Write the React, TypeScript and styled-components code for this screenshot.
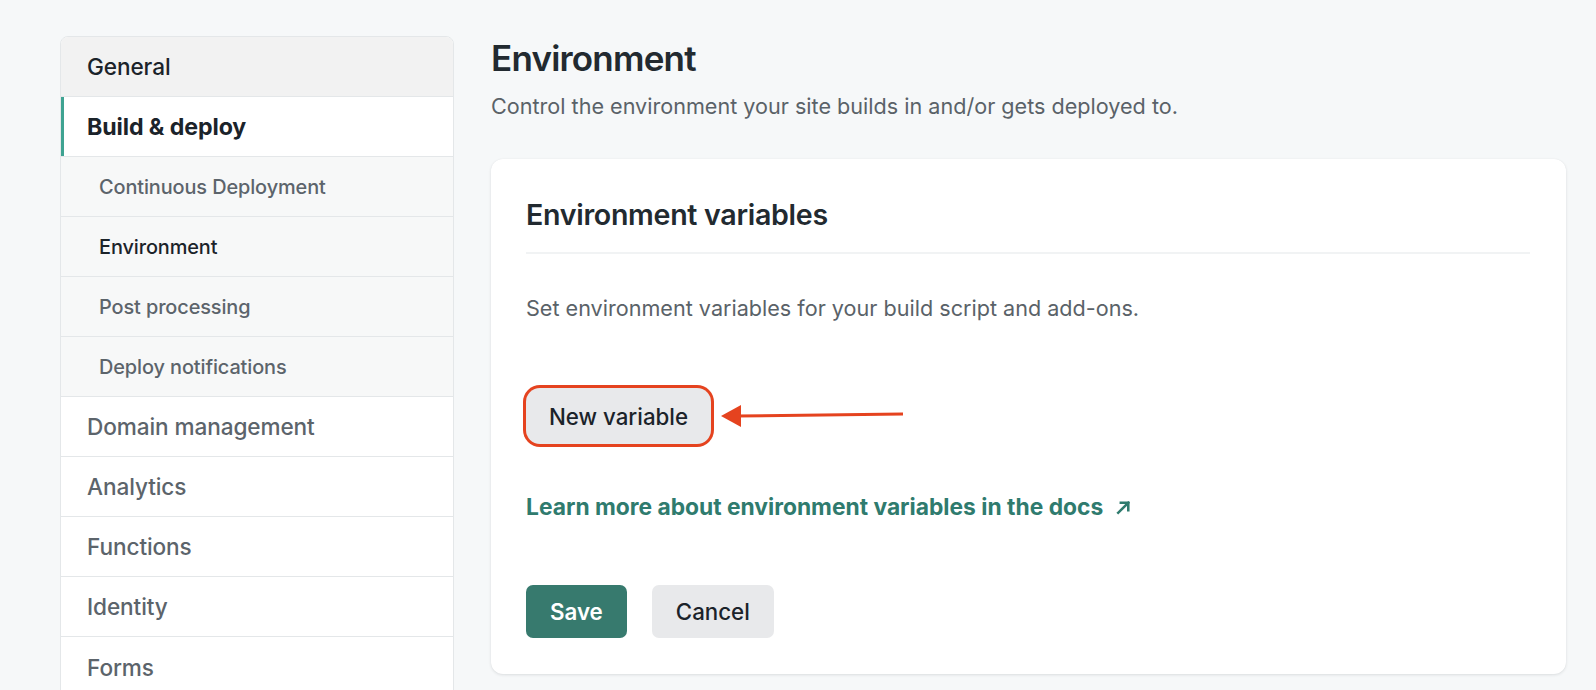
import React from "react";
import styled, { createGlobalStyle } from "styled-components";

const GlobalStyle = createGlobalStyle`
  html, body {
    margin: 0;
    padding: 0;
    background: #f6f8f9;
    font-family: Inter, "Noto Sans", "Liberation Sans", sans-serif;
    -webkit-font-smoothing: antialiased;
  }
  body { overflow: hidden; }
  * { box-sizing: border-box; }
`;

const Page = styled.div`
  display: flex;
  align-items: flex-start;
  gap: 37px;
  padding: 36px 30px 0 60px;
  height: 690px;
  overflow: hidden;
`;

const Sidebar = styled.nav`
  flex: 0 0 394px;
  border: 1px solid #e4e7e9;
  border-radius: 8px 8px 0 0;
  overflow: hidden;
  background: #ffffff;
`;

type ItemProps = { $variant: "header" | "active" | "primary" | "sub"; $current?: boolean };

const sizeFor = (v: ItemProps["$variant"]) =>
  v === "sub" ? "19.9px" : v === "active" ? "23.2px" : "22.6px";

const NavItem = styled.div<ItemProps>`
  display: flex;
  align-items: center;
  height: 60px;
  border-bottom: 1px solid #e4e7e9;
  padding-left: ${(p) => (p.$variant === "sub" ? "38px" : "26px")};
  font-size: ${(p) => sizeFor(p.$variant)};
  font-weight: ${(p) => (p.$variant === "active" ? 700 : 500)};
  letter-spacing: -0.1px;
  color: ${(p) =>
    p.$variant === "header" || p.$variant === "active" || p.$current ? "#1b232a" : "#5c646b"};
  background: ${(p) =>
    p.$variant === "header" ? "#f2f2f2" : p.$variant === "sub" ? "#f7f8f8" : "#ffffff"};
  box-shadow: ${(p) => (p.$variant === "active" ? "inset 3px 0 0 #3fa392" : "none")};
  &:last-child { border-bottom: none; }
`;

const Main = styled.main`
  flex: 1;
  display: flex;
  flex-direction: column;
  padding-top: 1px;
`;

const Title = styled.h1`
  margin: 0;
  font-size: 35px;
  line-height: 42px;
  font-weight: 600;
  color: #222a30;
  letter-spacing: -0.8px;
`;

const Lead = styled.p`
  margin: 12px 0 0;
  font-size: 21.6px;
  line-height: 30px;
  color: #5a6268;
`;

const Card = styled.section`
  margin-top: 38px;
  background: #ffffff;
  border-radius: 12px;
  box-shadow: 0 1px 3px rgba(30, 40, 50, 0.12), 0 0 1px rgba(30, 40, 50, 0.06);
  padding: 41px 36px 36px 35px;
  display: flex;
  flex-direction: column;
  align-items: flex-start;
`;

const CardTitle = styled.h2`
  margin: 0;
  align-self: stretch;
  font-size: 28.6px;
  line-height: 30px;
  font-weight: 600;
  color: #222a30;
  letter-spacing: -0.3px;
  padding-bottom: 22px;
  border-bottom: 2px solid #f1f3f4;
`;

const Desc = styled.p`
  margin: 39px 0 0;
  font-size: 21.6px;
  line-height: 30px;
  color: #5a6268;
`;

const ButtonRow = styled.div`
  display: flex;
  align-items: center;
  gap: 10px;
  margin-top: 65px;
`;

const Button = styled.button<{ $tone: "primary" | "neutral"; $outlined?: boolean }>`
  display: inline-flex;
  align-items: center;
  justify-content: center;
  white-space: nowrap;
  border: none;
  font-family: inherit;
  font-size: 22.3px;
  font-weight: ${(p) => (p.$tone === "primary" ? 600 : 500)};
  color: ${(p) => (p.$tone === "primary" ? "#ffffff" : "#1b232a")};
  background: ${(p) => (p.$tone === "primary" ? "#377a6e" : "#e8e9eb")};
  border-radius: ${(p) => (p.$outlined ? "14px" : "7px")};
  box-shadow: ${(p) => (p.$outlined ? "0 0 0 3px #e5431f" : "none")};
  padding: ${(p) => (p.$outlined ? "0 23px" : "0 24px")};
  height: ${(p) => (p.$outlined ? "56px" : "53px")};
  cursor: pointer;
`;

const DocsLink = styled.a`
  display: inline-flex;
  align-items: center;
  gap: 12px;
  margin-top: 48px;
  font-size: 22.8px;
  line-height: 30px;
  font-weight: 700;
  color: #2f7b6e;
  text-decoration: none;
  letter-spacing: 0;
`;

const Actions = styled.div`
  display: flex;
  gap: 25px;
  margin-top: 63px;
`;

const navItems: { label: string; variant: ItemProps["$variant"]; current?: boolean }[] = [
  { label: "General", variant: "header" },
  { label: "Build & deploy", variant: "active" },
  { label: "Continuous Deployment", variant: "sub" },
  { label: "Environment", variant: "sub", current: true },
  { label: "Post processing", variant: "sub" },
  { label: "Deploy notifications", variant: "sub" },
  { label: "Domain management", variant: "primary" },
  { label: "Analytics", variant: "primary" },
  { label: "Functions", variant: "primary" },
  { label: "Identity", variant: "primary" },
  { label: "Forms", variant: "primary" },
];

const ExternalArrow = () => (
  <svg width="17" height="17" viewBox="0 0 16 16" fill="none" stroke="#2f7b6e" strokeWidth="2.4" strokeLinecap="square">
    <path d="M3 13 L12.5 3.5" />
    <path d="M5.5 3.5 H12.5 V10.5" />
  </svg>
);

const PointerArrow = () => (
  <svg width="184" height="26" viewBox="0 0 184 26">
    <line x1="16" y1="13" x2="182" y2="11" stroke="#e5431f" strokeWidth="3" />
    <polygon points="0,13 20,2 20,24" fill="#e5431f" />
  </svg>
);

export default function App() {
  return (
    <>
      <GlobalStyle />
      <Page>
        <Sidebar>
          {navItems.map((item) => (
            <NavItem key={item.label} $variant={item.variant} $current={item.current}>
              {item.label}
            </NavItem>
          ))}
        </Sidebar>
        <Main>
          <Title>Environment</Title>
          <Lead>Control the environment your site builds in and/or gets deployed to.</Lead>
          <Card>
            <CardTitle>Environment variables</CardTitle>
            <Desc>Set environment variables for your build script and add-ons.</Desc>
            <ButtonRow>
              <Button $tone="neutral" $outlined>
                New variable
              </Button>
              <PointerArrow />
            </ButtonRow>
            <DocsLink href="#">
              Learn more about environment variables in the docs
              <ExternalArrow />
            </DocsLink>
            <Actions>
              <Button $tone="primary">Save</Button>
              <Button $tone="neutral">Cancel</Button>
            </Actions>
          </Card>
        </Main>
      </Page>
    </>
  );
}
